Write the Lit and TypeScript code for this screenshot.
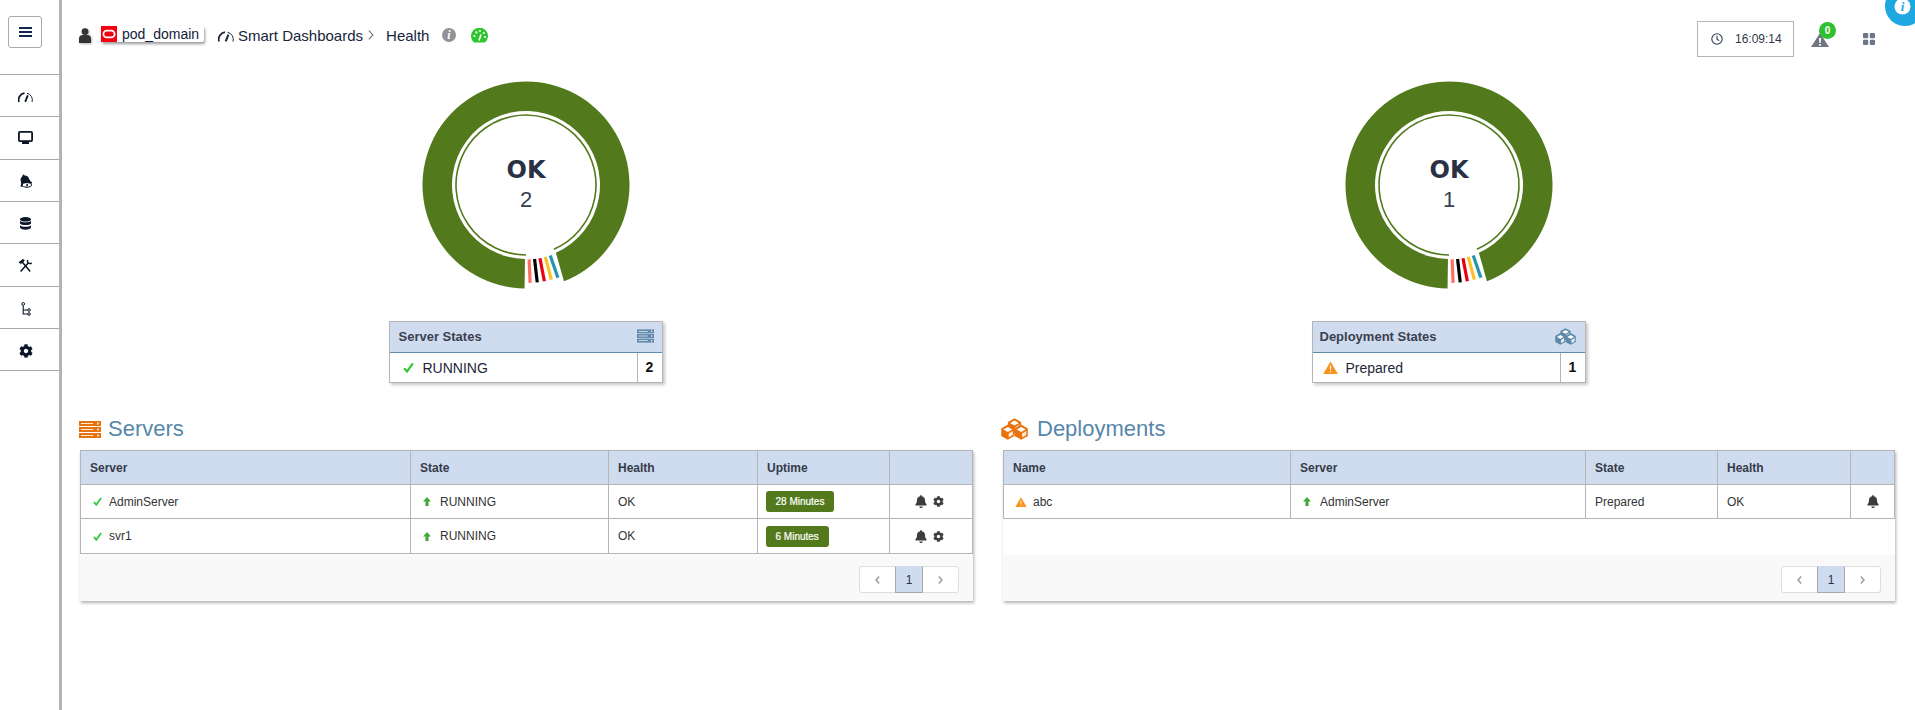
import { LitElement, html, svg, css } from "lit";
import { customElement } from "lit/decorators.js";

const BELL = "M224 512c35.32 0 63.97-28.65 63.97-64H160.03c0 35.35 28.65 64 63.97 64zm215.39-149.71c-19.32-20.76-55.47-51.99-55.47-154.29 0-77.7-54.48-139.9-127.94-155.16V32c0-17.67-14.32-32-31.98-32s-31.98 14.33-31.98 32v20.84C118.56 68.1 64.08 130.3 64.08 208c0 102.3-36.15 133.53-55.47 154.29-6 6.45-8.66 14.16-8.61 21.71.11 16.4 12.98 32 32.1 32h383.8c19.12 0 32-15.6 32.1-32 .05-7.55-2.61-15.27-8.61-21.71z";
const COG = "M487.4 315.7l-42.6-24.6c4.3-23.2 4.3-47 0-70.2l42.6-24.6c4.9-2.8 7.1-8.6 5.5-14-11.1-35.6-30-67.8-54.7-94.6-3.8-4.1-10-5.1-14.8-2.3L380.8 110c-17.9-15.4-38.5-27.3-60.8-35.1V25.8c0-5.6-3.9-10.5-9.4-11.7-36.7-8.2-74.3-7.8-109.2 0-5.5 1.2-9.4 6.1-9.4 11.7V75c-22.2 7.9-42.8 19.8-60.8 35.1L88.7 85.5c-4.9-2.8-11-1.9-14.8 2.3-24.7 26.7-43.6 58.9-54.7 94.6-1.7 5.4.6 11.2 5.5 14L67.3 221c-4.3 23.2-4.3 47 0 70.2l-42.6 24.6c-4.9 2.8-7.1 8.6-5.5 14 11.1 35.6 30 67.8 54.7 94.6 3.8 4.1 10 5.1 14.8 2.3l42.6-24.6c17.9 15.4 38.5 27.3 60.8 35.1v49.2c0 5.6 3.9 10.5 9.4 11.7 36.7 8.2 74.3 7.8 109.2 0 5.5-1.2 9.4-6.1 9.4-11.7v-49.2c22.2-7.9 42.8-19.8 60.8-35.1l42.6 24.6c4.9 2.8 11 1.9 14.8-2.3 24.7-26.7 43.6-58.9 54.7-94.6 1.5-5.5-.7-11.3-5.6-14.1zM256 336c-44.1 0-80-35.9-80-80s35.9-80 80-80 80 35.9 80 80-35.9 80-80 80z";

const NAVY = "#0b1526";

const bell = (cls: string) => html`<svg class=${cls} viewBox="0 0 448 512" fill="#3d3d3d"><path d=${BELL}/></svg>`;
const cog = (cls: string, c = "#3d3d3d") => html`<svg class=${cls} viewBox="0 0 512 512" fill=${c}><path d=${COG}/></svg>`;
const check = (cls: string) => html`<svg class=${cls} viewBox="0 0 10 10" fill="none"><path d="M1 5.6 L3.7 8.6 L9 1.2" stroke="#2fc936" stroke-width="2"/></svg>`;
const up = () => html`<svg class="up" viewBox="0 0 8 9"><path d="M4 0 L8 4.4 H5.6 V9 H2.4 V4.4 H0 Z" fill="#47a83a"/></svg>`;
const warn = (cls: string) => html`<svg class=${cls} viewBox="0 0 14 12"><path d="M7 .3 L13.8 12 H.2 Z" fill="#f7931e"/><path d="M6.4 4.4 H7.6 L7.4 8.4 H6.6 Z M6.4 9.2 H7.6 V10.4 H6.4 Z" fill="#fff"/></svg>`;
const gauge = (cls: string, c: string) => html`<svg class=${cls} viewBox="0 0 16 10.6" fill="none" stroke=${c}>
  <path d="M1 10.6 A7.3 7.3 0 0 1 7 1.2" stroke-width="1.8"/><path d="M9.6 1.3 A7.3 7.3 0 0 1 15 10.6" stroke-width="1"/><path d="M7.7 10.4 L10.4 3.6" stroke-width="2"/></svg>`;
const server = (cls: string, c: string) => html`<svg class=${cls} viewBox="0 0 22 17">
  ${[0, 6, 12].map((y) => svg`<rect x="0" y=${y} width="22" height="5" fill=${c}/><rect x="2" y=${y + 2} width="12" height="1" fill="#fff" opacity=".85"/><rect x="18" y=${y + 1.6} width="1.8" height="1.8" fill="#fff" opacity=".85"/>`)}
</svg>`;
const cube = (x: number, y: number, c: string) => svg`
  <path d="M${x} ${y - 7.6} L${x + 6.6} ${y - 3.8} V${y + 3.8} L${x} ${y + 7.6} L${x - 6.6} ${y + 3.8} V${y - 3.8} Z" fill=${c}/>
  <path d="M${x} ${y - 5.2} L${x + 4.4} ${y - 2.7} L${x} ${y - .2} L${x - 4.4} ${y - 2.7} Z" fill="#fff"/>
  <path d="M${x + .9} ${y + 1.2} L${x + 5.1} ${y - 1.2} V${y + 2.9} L${x + .9} ${y + 5.4} Z" fill="#fff" opacity=".85"/>`;
const cubes = (cls: string, c: string) => html`<svg class=${cls} viewBox="0 0 27 22">${cube(13.5, 7.8, c)}${cube(6.8, 14.2, c)}${cube(20.2, 14.2, c)}</svg>`;

const P = (r: number, a: number, c = 105) => {
  const t = (a * Math.PI) / 180;
  return `${(c + r * Math.sin(t)).toFixed(2)} ${(c - r * Math.cos(t)).toFixed(2)}`;
};
const STRIPES: [number, string][] = [[177.6, "#ff6f61"], [173.4, "#000"], [169.2, "#e60012"], [165, "#fdc125"], [161, "#2296ad"]];

const donut = (n: number) => html`<svg class="donut" viewBox="0 0 210 210">
  <path fill="#527a1c" d="M${P(103.5, 180.8)} A103.5 103.5 0 1 1 ${P(103.5, 158.5)} L${P(74, 156.2)} A74 74 0 1 0 ${P(74, 180.8)} Z"/>
  <path fill="none" stroke="#527a1c" stroke-width="1.6" d="M${P(70, 180)} A70 70 0 1 1 ${P(70, 156.5)}"/>
  ${STRIPES.map(([a, col]) => svg`<path stroke=${col} stroke-width="3.2" d="M${P(74.5, a)} L${P(98, a)}"/>`)}
  <text class="ok" x="105" y="98" text-anchor="middle">OK</text>
  <text class="num" x="105" y="126.5" text-anchor="middle">${n}</text>
</svg>`;

const chevL = html`<svg class="chev" viewBox="0 0 5 8" fill="none"><path d="M4.2 .6 L1 4 L4.2 7.4" stroke="#999" stroke-width="1.4"/></svg>`;
const chevR = html`<svg class="chev" viewBox="0 0 5 8" fill="none"><path d="M.8 .6 L4 4 L.8 7.4" stroke="#999" stroke-width="1.4"/></svg>`;
const pager = html`<div class="pager"><span class="pg">${chevL}</span><span class="pg cur">1</span><span class="pg nxt">${chevR}</span></div>`;

const servers = [
  { name: "AdminServer", up: "28 Minutes", last: false },
  { name: "svr1", up: "6 Minutes", last: true },
];

const sideIcons = [
  html`<svg class="si sg" viewBox="0 0 16 10.6" fill="none" stroke=${NAVY}><path d="M1 10.6 A7.3 7.3 0 0 1 7 1.2" stroke-width="1.8"/><path d="M9.6 1.3 A7.3 7.3 0 0 1 15 10.6" stroke-width="1"/><path d="M7.7 10.4 L10.4 3.6" stroke-width="2"/></svg>`,
  html`<svg class="si sm" viewBox="0 0 15 13"><rect x=".9" y=".9" width="13.2" height="9.2" rx="1" fill="#fff" stroke=${NAVY} stroke-width="1.8"/><rect x="4" y="10.6" width="7" height="2.4" fill=${NAVY}/></svg>`,
  html`<svg class="si sb" viewBox="0 0 13 14"><g transform="rotate(-18 6 7) translate(.2 .2) scale(.027)"><path d=${BELL} fill=${NAVY}/></g><ellipse cx="7.9" cy="10.9" rx="4.6" ry="2.2" fill="#fff" stroke=${NAVY} stroke-width="1"/><circle cx="8.1" cy="10.9" r="1" fill=${NAVY}/></svg>`,
  html`<svg class="si sd" viewBox="0 0 11 13"><ellipse cx="5.5" cy="2.3" rx="5.5" ry="2.3" fill=${NAVY}/><path d="M0 3.8 C1.5 5.8 9.5 5.8 11 3.8 V6.4 C9.5 8.6 1.5 8.6 0 6.4 Z M0 8.2 C1.5 10.2 9.5 10.2 11 8.2 V10.6 C9.5 13.6 1.5 13.6 0 10.6 Z" fill=${NAVY}/></svg>`,
  html`<svg class="si st" viewBox="0 0 15 13" fill="none" stroke=${NAVY}><path d="M3.4 2 L12.2 12.4" stroke-width="1.5"/><path d="M.8 3.6 L4.8 .6 L6.4 1.4 L2.6 4.8" fill=${NAVY} stroke-width="1"/><path d="M2.6 12.4 L10.2 4" stroke-width="1.5"/><path d="M9.6 1 C8.9 3.4 10.8 5.4 13.8 4.2" stroke-width="1.5"/></svg>`,
  html`<svg class="si sh" viewBox="0 0 10 14" fill="none" stroke=${NAVY} stroke-width="1"><circle cx="2.2" cy="1.9" r="1.4"/><path d="M2.2 3.4 V12 H6.8 M2.2 8 H6.8" stroke-width="1.1"/><circle cx="8" cy="8" r="1.3"/><circle cx="8" cy="12" r="1.3"/></svg>`,
  html`<svg class="si sc" viewBox="0 0 512 512" fill=${NAVY}><path d=${COG}/></svg>`,
];

@customElement("app-root")
export class AppRoot extends LitElement {
  static styles = css`
    :host { display: block; position: relative; width: 100%; height: 710px; overflow: hidden; background: #fff; font-family: "Liberation Sans", Arial, sans-serif; color: #333; }
    * { box-sizing: border-box; }
    svg { display: block; flex: none; }
    .shell { display: flex; height: 710px; }
    .side { width: 62px; flex: none; border-right: 3px solid #b4b4b4; }
    .menu { width: 34px; height: 32px; margin: 16px 0 26px 8px; border: 1px solid #aaa; border-radius: 3px; display: flex; flex-direction: column; justify-content: center; align-items: center; gap: 1.6px; background: #fff; }
    .menu i { display: block; width: 13px; height: 2.2px; background: #10284d; }
    .items { border-top: 1px solid #a8a8a8; }
    .item { height: 42.33px; border-bottom: 1px solid #a8a8a8; display: flex; align-items: center; justify-content: center; width: 100%; padding-right: 8px; }
    .si { width: 15px; }
    .sg { height: 10px; margin-top: 3px; } .sm { height: 13px; } .sb { height: 14px; margin-top: 1px; } .sd { width: 11px; height: 13px; margin-top: 2px; } .st { height: 13px; margin-top: 1px; } .sh { width: 10px; height: 14px; margin-top: 3px; } .sc { width: 14px; height: 14px; margin-top: 3px; }
    .main { flex: 1; min-width: 0; }
    .header { height: 80px; display: flex; justify-content: space-between; padding: 0 40px 0 17px; }
    .crumbs { display: flex; align-items: center; height: 18px; margin-top: 26px; font-size: 15px; color: #15263a; }
    .person { width: 12px; height: 15px; margin-right: 10px; filter: drop-shadow(1px 1px 1px rgba(0,0,0,.3)); }
    .domain { display: flex; align-items: center; align-self: flex-start; height: 16px; width: 103px; background: #fff; border-radius: 2px; box-shadow: 1px 2px 3px rgba(0,0,0,.4); font-size: 14px; line-height: 14px; margin-right: 14px; color: #10223a; }
    .oracle { width: 16px; height: 16px; margin-right: 5px; }
    .bg { width: 16px; height: 10.6px; margin-right: 4px; margin-top: 3px; }
    .sep { width: 6px; height: 10px; margin: 0 12px 0 5px; }
    .info { width: 14px; height: 14px; margin: 0 16px 0 13px; }
    .okg { width: 17px; height: 15px; margin-left: -1px; }
    .tools { display: flex; align-items: center; height: 36px; margin-top: 21px; }
    .clock { width: 97px; height: 36px; border: 1px solid #b5b5b5; display: flex; align-items: center; padding-left: 13px; font-size: 12px; color: #2f3748; }
    .clock svg { width: 12px; height: 12px; margin-right: 12px; }
    .alert { position: relative; width: 18px; height: 14px; margin: 2px 34px 0 17px; }
    .alert svg { width: 18px; height: 14px; }
    .badge { position: absolute; left: 8px; top: -11px; width: 17px; height: 17px; border-radius: 50%; background: #2fbf2f; color: #fff; font-size: 10px; font-weight: 700; line-height: 17px; text-align: center; }
    .gridi { width: 12px; height: 12px; }
    .corner { position: absolute; left: 1885px; top: -14px; width: 40px; height: 40px; border-radius: 50%; background: #1ea7e1; }
    .corner svg { position: absolute; left: 9px; top: 12px; width: 17px; height: 17px; }
    .cols { display: grid; grid-template-columns: 893px 893px; gap: 30px; padding-left: 17px; }
    .col { display: flex; flex-direction: column; }
    .donut { width: 210px; height: 210px; align-self: center; }
    .ok { font-family: "DejaVu Sans", sans-serif; font-weight: 700; font-size: 24px; fill: #2a3145; }
    .num { font-family: "Liberation Sans", sans-serif; font-size: 22px; fill: #364154; }
    .card { width: 274px; height: 62px; margin-top: 31px; align-self: center; border: 1px solid #b5b5b5; box-shadow: 2px 2px 3px rgba(0,0,0,.22); background: #fff; }
    .chead { height: 31px; background: #cfdbee; border-bottom: 1px solid #5f8aa8; display: flex; align-items: center; justify-content: space-between; padding: 0 9px 2px; font-size: 13px; font-weight: 700; color: #3b3f4f; }
    .chead.dep { padding-left: 7px; }
    .chead .i1 { width: 17px; height: 14px; margin-right: -1px; }
    .chead .i2 { width: 21px; height: 17px; margin-right: 0; }
    .crow { height: 29px; display: flex; align-items: center; font-size: 14px; color: #1c2738; }
    .crow .ck { width: 11px; height: 11px; margin: 0 9px 0 13px; }
    .crow .tr { width: 15px; height: 13px; margin: 0 8px 0 10px; }
    .crow b { margin-left: auto; width: 25px; height: 100%; border-left: 1px solid #b5b5b5; text-align: center; line-height: 29px; color: #111; }
    .title { display: flex; align-items: center; height: 22px; margin: 35px 0 10px; font-size: 22px; font-weight: 400; color: #5687aa; }
    .title .i1 { width: 22px; height: 17px; margin-right: 7px; }
    .title .i2 { width: 27px; height: 22px; margin: 0 9px 0 -1px; }
    .panel { height: 151px; margin-left: 1px; display: flex; flex-direction: column; background: #fff; box-shadow: 1px 2px 3px rgba(0,0,0,.3); }
    .panel.left { margin-right: -1px; }
    table { width: 100%; table-layout: fixed; border-collapse: collapse; font-size: 12px; }
    th, td { border: 1px solid #b5b5b5; padding: 0 0 0 9px; text-align: left; white-space: nowrap; }
    th { height: 34px; background: #cfdbee; font-weight: 700; color: #363b4b; }
    td { height: 34px; color: #333; }
    tr.last td { height: 35px; }
    td.nop { padding: 0; }
    .w1 { width: 330px; } .w2 { width: 198px; } .w3 { width: 149px; } .w4 { width: 132px; }
    .x1 { width: 287px; } .x2 { width: 295px; } .x3 { width: 132px; } .x4 { width: 133px; }
    .cell { display: flex; align-items: center; }
    .ck2 { width: 9px; height: 9px; margin: 0 7px 0 3px; }
    .up { width: 8px; height: 9px; margin: 0 9px 0 3px; }
    .tr2 { width: 12px; height: 10px; margin: 0 6px 0 2px; }
    .pill { display: inline-block; height: 21px; line-height: 21px; padding: 0 10px 0 9.5px; border-radius: 3px; background: #527a1c; color: #fff; font-size: 10px; -webkit-text-stroke: .2px #fff; }
    .upc { padding-left: 8px; }
    .acts { display: flex; align-items: center; justify-content: center; gap: 6px; padding: 0; }
    .acts.sv { padding-right: 3px; }
    .acb { width: 12px; height: 13px; } .acg { width: 11px; height: 11px; }
    .spacer { height: 36px; flex: none; }
    .foot { flex: 1; background: #f9f9f9; display: flex; justify-content: flex-end; align-items: flex-end; padding: 0 14px 8px 0; }
    .pager { display: flex; height: 27px; width: 100px; background: #fff; border: 1px solid #ddd; border-radius: 3px; }
    .pg { width: 35px; display: flex; align-items: center; justify-content: center; font-size: 12px; color: #333; }
    .pg.nxt { width: 36px; flex: 1; }
    .pg.cur { width: 28px; flex: none; margin: -1px 0; background: #cfdbee; border: 1px solid #a9a9a9; border-top-color: #cfdbee; color: #2c3344; }
    .chev { width: 5px; height: 8px; }
  `;

  render() {
    return html`
      <div class="corner"><svg viewBox="0 0 17 17"><circle cx="8.5" cy="8.5" r="8" fill="#fff"/><text x="8.5" y="13" text-anchor="middle" font-family="Liberation Serif" font-style="italic" font-weight="700" font-size="13" fill="#1ea7e1">i</text></svg></div>
      <div class="shell">
        <nav class="side">
          <div class="menu"><i></i><i></i><i></i></div>
          <div class="items">${sideIcons.map((i) => html`<div class="item">${i}</div>`)}</div>
        </nav>
        <div class="main">
          <header class="header">
            <div class="crumbs">
              <svg class="person" viewBox="0 0 12 15"><circle cx="6" cy="3.6" r="3.4" fill="#333"/><path d="M0 15 V10.4 C0 8 2 7 3.6 7 H8.4 C10 7 12 8 12 10.4 V15 Z" fill="#333"/></svg>
              <div class="domain">
                <svg class="oracle" viewBox="0 0 16 16"><rect width="16" height="16" fill="#f5000f"/><rect x="2.4" y="4.6" width="11.2" height="6.8" rx="3.4" fill="none" stroke="#fff" stroke-width="1.8"/></svg>
                pod_domain
              </div>
              ${gauge("bg", "#1a2433")}
              <span>Smart Dashboards</span>
              <svg class="sep" viewBox="0 0 6 10" fill="none"><path d="M.8 .6 L5 5 L.8 9.4" stroke="#777" stroke-width="1.1"/></svg>
              <span>Health</span>
              <svg class="info" viewBox="0 0 14 14"><circle cx="7" cy="7" r="7" fill="#929297"/><text x="7" y="11.4" text-anchor="middle" font-family="Liberation Serif" font-style="italic" font-weight="700" font-size="12" fill="#fff">i</text></svg>
              <svg class="okg" viewBox="0 0 17 15"><path d="M3 14.6 A8.5 8.5 0 1 1 14 14.6 Z" fill="#2fc52f"/><g fill="#fff"><circle cx="3.4" cy="8" r="1.1"/><circle cx="5.4" cy="4.4" r="1.1"/><circle cx="9" cy="3" r="1.1"/><circle cx="12.8" cy="5" r="1.1"/><circle cx="14" cy="9" r="1.1"/></g><path d="M8 12.5 L10 6.6" stroke="#fff" stroke-width="1.6"/></svg>
            </div>
            <div class="tools">
              <div class="clock">
                <svg viewBox="0 0 12 12" fill="none" stroke="#2f3d55" stroke-width="1.1"><circle cx="6" cy="6" r="5.2"/><path d="M6 2.8 V6.2 L8.2 7.6"/></svg>
                16:09:14
              </div>
              <div class="alert">
                <svg viewBox="0 0 18 14"><path d="M9 0 L18 14 H0 Z" fill="#6f7682"/><path d="M8 5 H10 L9.7 10 H8.3 Z M8.1 11 H9.9 V12.8 H8.1 Z" fill="#fff"/></svg>
                <span class="badge">0</span>
              </div>
              <svg class="gridi" viewBox="0 0 12 12" fill="#6b7686"><rect width="5.2" height="5.2" rx="1"/><rect x="6.8" width="5.2" height="5.2" rx="1"/><rect y="6.8" width="5.2" height="5.2" rx="1"/><rect x="6.8" y="6.8" width="5.2" height="5.2" rx="1"/></svg>
            </div>
          </header>
          <div class="cols">
            <section class="col">
              ${donut(2)}
              <div class="card">
                <div class="chead">Server States ${server("i1", "#5d88a8")}</div>
                <div class="crow">${check("ck")}RUNNING<b>2</b></div>
              </div>
              <h2 class="title">${server("i1", "#e8720c")}Servers</h2>
              <div class="panel left">
                <table>
                  <colgroup><col class="w1"/><col class="w2"/><col class="w3"/><col class="w4"/><col/></colgroup>
                  <thead><tr><th>Server</th><th>State</th><th>Health</th><th>Uptime</th><th></th></tr></thead>
                  <tbody>
                    ${servers.map((s) => html`<tr class=${s.last ? "last" : ""}>
                      <td><div class="cell">${check("ck2")}${s.name}</div></td>
                      <td><div class="cell">${up()}RUNNING</div></td>
                      <td>OK</td>
                      <td class="upc"><span class="pill">${s.up}</span></td>
                      <td class="nop"><div class="acts sv">${bell("acb")}${cog("acg")}</div></td>
                    </tr>`)}
                  </tbody>
                </table>
                <div class="foot">${pager}</div>
              </div>
            </section>
            <section class="col">
              ${donut(1)}
              <div class="card">
                <div class="chead dep">Deployment States ${cubes("i2", "#5d88a8")}</div>
                <div class="crow">${warn("tr")}Prepared<b>1</b></div>
              </div>
              <h2 class="title">${cubes("i2", "#e8720c")}Deployments</h2>
              <div class="panel">
                <table>
                  <colgroup><col class="x1"/><col class="x2"/><col class="x3"/><col class="x4"/><col/></colgroup>
                  <thead><tr><th>Name</th><th>Server</th><th>State</th><th>Health</th><th></th></tr></thead>
                  <tbody>
                    <tr>
                      <td><div class="cell">${warn("tr2")}abc</div></td>
                      <td><div class="cell">${up()}AdminServer</div></td>
                      <td>Prepared</td>
                      <td>OK</td>
                      <td class="nop"><div class="acts">${bell("acb")}</div></td>
                    </tr>
                  </tbody>
                </table>
                <div class="spacer"></div>
                <div class="foot">${pager}</div>
              </div>
            </section>
          </div>
        </div>
      </div>
    `;
  }
}
